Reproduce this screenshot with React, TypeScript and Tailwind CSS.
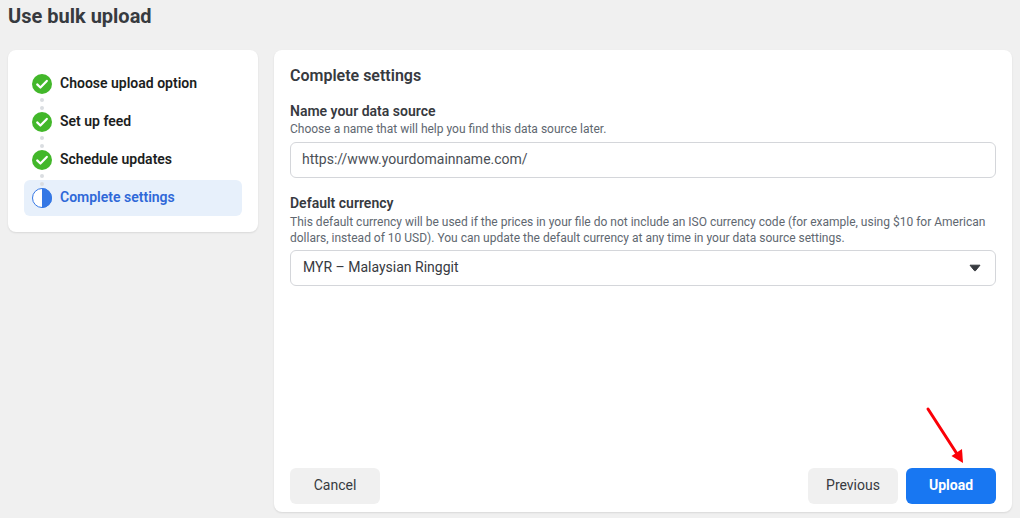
const steps = [
  { name: 'Choose upload option', done: true },
  { name: 'Set up feed', done: true },
  { name: 'Schedule updates', done: true },
  { name: 'Complete settings', done: false },
];

function CheckIcon() {
  return (
    <svg width="20" height="20" viewBox="0 0 20 20" className="shrink-0">
      <circle cx="10" cy="10" r="10" fill="#42b72a" />
      <path d="M5.2 10.4l3.2 3.1 6.4-6.6" fill="none" stroke="#fff" strokeWidth="2.2" strokeLinecap="round" strokeLinejoin="round" />
    </svg>
  );
}

function HalfIcon() {
  return (
    <svg width="20" height="20" viewBox="0 0 20 20" className="shrink-0">
      <circle cx="10" cy="10" r="9.5" fill="#fff" stroke="#3578e5" strokeWidth="1" />
      <path d="M10 0a10 10 0 0 1 0 20z" fill="#3578e5" />
    </svg>
  );
}

export default function App() {
  return (
    <div className="relative h-[518px] w-[1020px] overflow-hidden bg-[#f0f0f0] font-['Roboto',sans-serif] text-[#1c1e21]">
      <h1 className="pl-2 pt-[4px] text-[20px] font-bold leading-6 text-[#373a3f]">Use bulk upload</h1>

      <div className="mt-[22px] flex items-start gap-4 px-2">
        {/* Steps */}
        <div className="flex w-[250px] flex-col gap-[2px] rounded-lg bg-white px-4 pb-4 pt-[16px] shadow-[0_1px_2px_rgba(0,0,0,0.1)]">
          {steps.map((step, i) => (
            <div
              key={step.name}
              className={`relative flex h-9 items-center gap-2 rounded-md pl-2 text-[14px] font-semibold ${
                step.done ? 'text-[#1c1e21]' : 'bg-[#e7f0fb] text-[#2f68d8]'
              }`}
            >
              {step.done ? <CheckIcon /> : <HalfIcon />}
              <span className="pb-[2px]">{step.name}</span>
              {i < 3 && (
                <div className="absolute left-4 top-[32px] z-10 flex flex-col gap-1">
                  <span className="h-1 w-1 rounded-full bg-[#dadde1]" />
                  <span className="h-1 w-1 rounded-full bg-[#dadde1]" />
                </div>
              )}
            </div>
          ))}
        </div>

        {/* Settings */}
        <div className="flex h-[462px] w-[738px] flex-col rounded-lg bg-white px-4 pb-2 pt-[16px] shadow-[0_1px_2px_rgba(0,0,0,0.1)]">
          <h2 className="text-[16px] font-semibold leading-5 text-[#373a3f]">Complete settings</h2>

          <div className="mt-[15px] text-[14px] font-semibold leading-5 text-[#373a3f]">Name your data source</div>
          <p className="text-[12px] leading-4 text-[#606770]">Choose a name that will help you find this data source later.</p>
          <div className="mt-[5px] flex h-9 items-center rounded-md border border-[#d4d6da] px-[11px] pb-px text-[14px] text-[#4b4f56]">
            https://www.yourdomainname.com/
          </div>

          <div className="mt-[15px] text-[14px] font-semibold leading-5 text-[#373a3f]">Default currency</div>
          <p className="mt-px text-[12px] leading-4 text-[#606770]">
            This default currency will be used if the prices in your file do not include an ISO currency code (for example, using $10 for American dollars, instead of 10 USD). You can update the default currency at any time in your data source settings.
          </p>
          <div className="mt-[4px] flex h-9 items-center justify-between rounded-md border border-[#d4d6da] px-3 pb-px text-[14px] text-[#373a3f]">
            <span>MYR – Malaysian Ringgit</span>
            <svg width="12" height="8" viewBox="0 0 12 8" className="mr-[2px] mt-px">
              <path d="M1 1.2h10L6.4 6.8a.5.5 0 0 1-.8 0z" fill="#373a3f" stroke="#373a3f" strokeLinejoin="round" />
            </svg>
          </div>

          <div className="mt-auto flex items-center justify-between">
            <button type="button" className="h-9 w-[90px] rounded-md bg-[#f0f0f0] pb-px text-[14px] text-[#373a3f]">Cancel</button>
            <div className="flex gap-2">
              <button type="button" className="h-9 w-[90px] rounded-md bg-[#f0f0f0] pb-px text-[14px] text-[#373a3f]">Previous</button>
              <button type="button" className="h-9 w-[90px] rounded-md bg-[#1877f2] pb-px text-[14px] font-bold text-white">Upload</button>
            </div>
          </div>
        </div>
      </div>

      {/* Red annotation arrow */}
      <svg className="absolute left-[920px] top-[400px]" width="50" height="70" viewBox="0 0 50 70">
        <path d="M8 9L39 57" stroke="#fb0007" strokeWidth="3" strokeLinecap="round" />
        <path d="M43 63L31.5 56L42 49z" fill="#fb0007" />
      </svg>
    </div>
  );
}
